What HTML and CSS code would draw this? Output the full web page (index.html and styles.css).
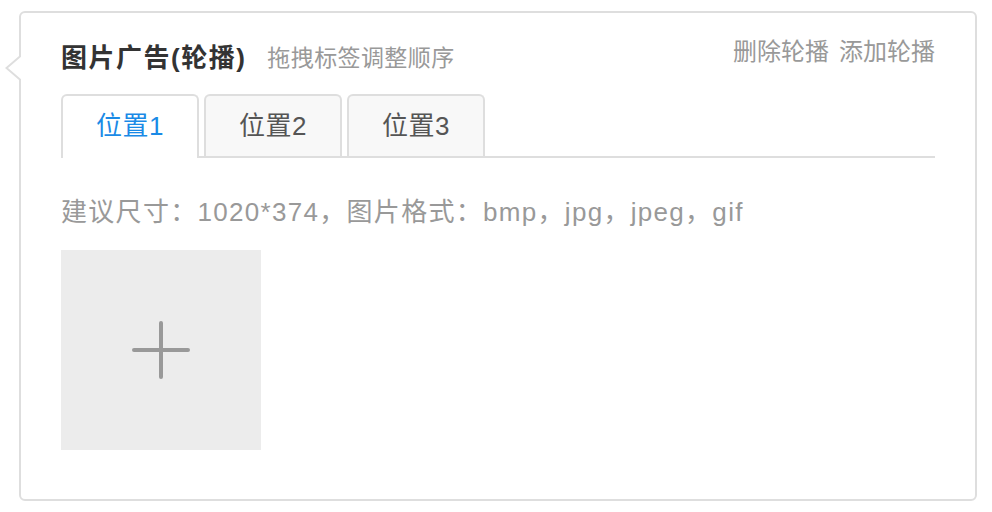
FILE: index.html
```html
<!DOCTYPE html>
<html lang="zh-CN">
<head>
<meta charset="utf-8">
<title>图片广告(轮播)</title>
<link rel="stylesheet" href="styles.css">
</head>
<body>
<div class="popover">
  <div class="header">
    <div class="title-group">
      <span class="title">图片广告(轮播)</span>
      <span class="subtitle">拖拽标签调整顺序</span>
    </div>
    <div class="actions">
      <a class="action">删除轮播</a>
      <a class="action">添加轮播</a>
    </div>
  </div>
  <div class="tabs">
    <div class="tab active">位置1</div>
    <div class="tab">位置2</div>
    <div class="tab">位置3</div>
  </div>
  <p class="hint">建议尺寸：1020*374，图片格式：bmp，jpg，jpeg，gif</p>
  <div class="upload">
    <svg class="plus" width="60" height="60" viewBox="0 0 60 60">
      <path d="M30 3 V57 M3 30 H57" stroke="#999" stroke-width="4" stroke-linecap="round" fill="none"/>
    </svg>
  </div>
</div>
</body>
</html>
```
FILE: styles.css
```css
* { box-sizing: border-box; }
body {
  margin: 0;
  background: #fff;
  font-family: "Liberation Sans", "Noto Sans CJK SC", sans-serif;
}
.popover {
  position: relative;
  margin: 11px 0 0 19px;
  width: 958px;
  height: 490px;
  border: 2px solid #dedede;
  border-radius: 6px;
  padding: 0 40px;
  background: #fff;
}
.popover::before,
.popover::after {
  content: "";
  position: absolute;
  top: 43px;
  width: 0;
  height: 0;
  border-top: 12px solid transparent;
  border-bottom: 12px solid transparent;
}
.popover::before {
  left: -16px;
  border-right: 14px solid #dedede;
}
.popover::after {
  left: -13px;
  border-right: 14px solid #fff;
}
.header {
  display: flex;
  justify-content: space-between;
  align-items: flex-start;
  padding-top: 24px;
}
.title-group {
  margin-top: 6px;
  line-height: 30px;
  display: flex;
  align-items: center;
  gap: 21px;
}
.title {
  font-size: 26px;
  font-weight: bold;
  letter-spacing: 1.5px;
  color: #333;
}
.subtitle {
  font-size: 23px;
  letter-spacing: 0.4px;
  color: #999;
}
.actions {
  line-height: 30px;
  display: flex;
  gap: 10px;
}
.action {
  font-size: 24px;
  color: #999;
}
.tabs {
  display: flex;
  align-items: flex-start;
  gap: 5px;
  margin-top: 21px;
  border-bottom: 2px solid #dedede;
}
.tab {
  width: 138px;
  height: 62px;
  padding-bottom: 5px;
  border: 2px solid #dedede;
  border-bottom: 0;
  border-radius: 6px 6px 0 0;
  background: #f8f8f8;
  display: flex;
  align-items: center;
  justify-content: center;
  font-size: 26px;
  letter-spacing: 0.5px;
  color: #555;
}
.tab.active {
  height: 64px;
  padding-bottom: 7px;
  margin-bottom: -2px;
  background: #fff;
  color: #1a8ae6;
}
.hint {
  margin: 39px 0 0;
  line-height: 30px;
  font-size: 26px;
  letter-spacing: 1.3px;
  color: #999;
}
.upload {
  margin-top: 23px;
  width: 200px;
  height: 200px;
  background: #ececec;
  display: flex;
  align-items: center;
  justify-content: center;
}
```
